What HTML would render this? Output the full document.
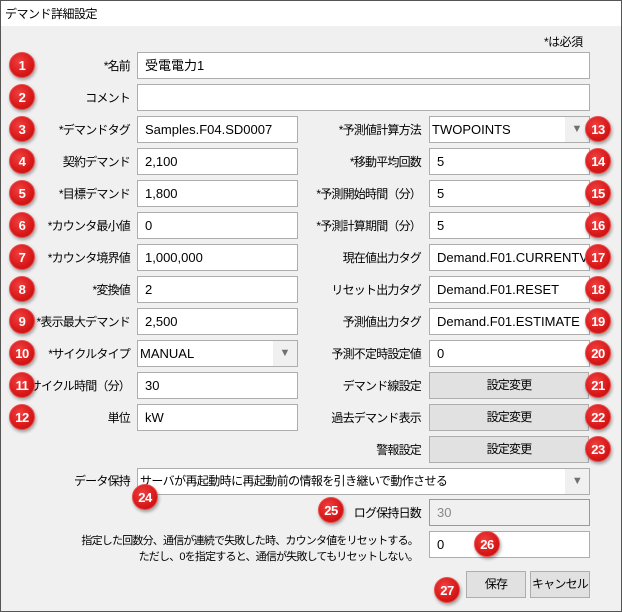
<!DOCTYPE html>
<html><head><meta charset="utf-8"><style>
body{margin:0;width:622px;height:612px;overflow:hidden;background:#f0f0f0;font-family:"Liberation Sans","Noto Sans CJK JP",sans-serif;font-size:12px;color:#000;position:relative}
.win{position:absolute;left:0;top:0;width:622px;height:612px;border:1px solid #555;box-sizing:border-box;background:#f0f0f0}
.title{position:absolute;left:1px;top:1px;width:620px;height:25px;background:#fff}
.title span{position:absolute;left:4px;top:4px;letter-spacing:-0.5px}
.a{position:absolute}
.in{position:absolute;height:25px;background:#fff;border:1px solid #adadad;line-height:25px;padding-left:7px;box-sizing:content-box;white-space:nowrap;overflow:hidden;font-size:13px}
.lb{position:absolute;text-align:right;line-height:27px;white-space:nowrap;font-size:12px;letter-spacing:-0.8px}
.btn{position:absolute;height:25px;background:#e1e1e1;border:1px solid #adadad;text-align:center;line-height:25px;font-size:12px;white-space:nowrap;letter-spacing:-0.8px}
.arr{position:absolute;right:0;top:0;width:24px;height:25px;background:#f0f0f0;color:#707070;text-align:center;font-size:11px;line-height:25px}
.c{position:absolute;width:26px;height:26px;border-radius:50%;background:radial-gradient(circle at 40% 35%,#f04040,#d81818 60%,#b80c0c);color:#fff;font-weight:bold;font-size:13px;text-align:center;line-height:26px;box-shadow:1px 2px 3px rgba(0,0,0,.35);border:1px solid #e84c4c;box-sizing:border-box;letter-spacing:-0.5px}
</style></head><body>
<div class="win"></div>
<div class="title"><span>デマンド詳細設定</span></div>
<div class="a" style="left:544px;top:33px;letter-spacing:-0.5px">*は必須</div>

<div class="lb" style="right:492px;top:53px">*名前</div>
<div class="lb" style="right:492px;top:85px">コメント</div>
<div class="lb" style="right:492px;top:117px">*デマンドタグ</div>
<div class="lb" style="right:492px;top:149px">契約デマンド</div>
<div class="lb" style="right:492px;top:181px">*目標デマンド</div>
<div class="lb" style="right:492px;top:213px">*カウンタ最小値</div>
<div class="lb" style="right:492px;top:245px">*カウンタ境界値</div>
<div class="lb" style="right:492px;top:277px">*変換値</div>
<div class="lb" style="right:492px;top:309px">*表示最大デマンド</div>
<div class="lb" style="right:492px;top:341px">*サイクルタイプ</div>
<div class="lb" style="right:492px;top:373px">サイクル時間（分）</div>
<div class="lb" style="right:492px;top:405px">単位</div>

<div class="in" style="left:137px;top:52px;width:444px">受電電力1</div>
<div class="in" style="left:137px;top:84px;width:444px"></div>
<div class="in" style="left:137px;top:116px;width:152px">Samples.F04.SD0007</div>
<div class="in" style="left:137px;top:148px;width:152px">2,100</div>
<div class="in" style="left:137px;top:180px;width:152px">1,800</div>
<div class="in" style="left:137px;top:212px;width:152px">0</div>
<div class="in" style="left:137px;top:244px;width:152px">1,000,000</div>
<div class="in" style="left:137px;top:276px;width:152px">2</div>
<div class="in" style="left:137px;top:308px;width:152px">2,500</div>
<div class="in" style="left:137px;top:340px;width:157px;padding-left:2px">MANUAL<div class="arr">▼</div></div>
<div class="in" style="left:137px;top:372px;width:152px">30</div>
<div class="in" style="left:137px;top:404px;width:152px">kW</div>

<div class="lb" style="right:201px;top:117px">*予測値計算方法</div>
<div class="lb" style="right:201px;top:149px">*移動平均回数</div>
<div class="lb" style="right:201px;top:181px">*予測開始時間（分）</div>
<div class="lb" style="right:201px;top:213px">*予測計算期間（分）</div>
<div class="lb" style="right:201px;top:245px">現在値出力タグ</div>
<div class="lb" style="right:201px;top:277px">リセット出力タグ</div>
<div class="lb" style="right:201px;top:309px">予測値出力タグ</div>
<div class="lb" style="right:201px;top:341px">予測不定時設定値</div>
<div class="lb" style="right:201px;top:373px">デマンド線設定</div>
<div class="lb" style="right:201px;top:405px">過去デマンド表示</div>
<div class="lb" style="right:201px;top:437px">警報設定</div>

<div class="in" style="left:429px;top:116px;width:157px;padding-left:2px">TWOPOINTS<div class="arr">▼</div></div>
<div class="in" style="left:429px;top:148px;width:152px">5</div>
<div class="in" style="left:429px;top:180px;width:152px">5</div>
<div class="in" style="left:429px;top:212px;width:152px">5</div>
<div class="in" style="left:429px;top:244px;width:152px">Demand.F01.CURRENTVALUE</div>
<div class="in" style="left:429px;top:276px;width:152px">Demand.F01.RESET</div>
<div class="in" style="left:429px;top:308px;width:152px">Demand.F01.ESTIMATE</div>
<div class="in" style="left:429px;top:340px;width:152px">0</div>
<div class="btn" style="left:429px;top:372px;width:158px">設定変更</div>
<div class="btn" style="left:429px;top:404px;width:158px">設定変更</div>
<div class="btn" style="left:429px;top:436px;width:158px">設定変更</div>

<div class="lb" style="right:492px;top:468px">データ保持</div>
<div class="in" style="left:137px;top:468px;width:449px;padding-left:2px;font-size:12px;letter-spacing:-0.6px">サーバが再起動時に再起動前の情報を引き継いで動作させる<div class="arr">▼</div></div>
<div class="lb" style="right:201px;top:500px">ログ保持日数</div>
<div class="in" style="left:429px;top:499px;width:152px;background:#f0f0f0;color:#888;border-color:#999">30</div>
<div class="a" style="right:204px;top:533px;text-align:right;line-height:16px;font-size:11px;letter-spacing:-0.8px;white-space:nowrap">指定した回数分、通信が連続で失敗した時、カウンタ値をリセットする。<br>ただし、0を指定すると、通信が失敗してもリセットしない。</div>
<div class="in" style="left:429px;top:531px;width:152px">0</div>
<div class="btn" style="left:466px;top:571px;width:58px">保存</div>
<div class="btn" style="left:530px;top:571px;width:58px">キャンセル</div>

<div class="c" style="left:9px;top:52px">1</div>
<div class="c" style="left:9px;top:84px">2</div>
<div class="c" style="left:9px;top:116px">3</div>
<div class="c" style="left:9px;top:148px">4</div>
<div class="c" style="left:9px;top:180px">5</div>
<div class="c" style="left:9px;top:212px">6</div>
<div class="c" style="left:9px;top:244px">7</div>
<div class="c" style="left:9px;top:276px">8</div>
<div class="c" style="left:9px;top:308px">9</div>
<div class="c" style="left:9px;top:340px">10</div>
<div class="c" style="left:9px;top:372px">11</div>
<div class="c" style="left:9px;top:404px">12</div>
<div class="c" style="left:585px;top:116px">13</div>
<div class="c" style="left:585px;top:148px">14</div>
<div class="c" style="left:585px;top:180px">15</div>
<div class="c" style="left:585px;top:212px">16</div>
<div class="c" style="left:585px;top:244px">17</div>
<div class="c" style="left:585px;top:276px">18</div>
<div class="c" style="left:585px;top:308px">19</div>
<div class="c" style="left:585px;top:340px">20</div>
<div class="c" style="left:585px;top:372px">21</div>
<div class="c" style="left:585px;top:404px">22</div>
<div class="c" style="left:585px;top:436px">23</div>
<div class="c" style="left:132px;top:484px">24</div>
<div class="c" style="left:318px;top:497px">25</div>
<div class="c" style="left:474px;top:531px">26</div>
<div class="c" style="left:434px;top:577px">27</div>
</body></html>
